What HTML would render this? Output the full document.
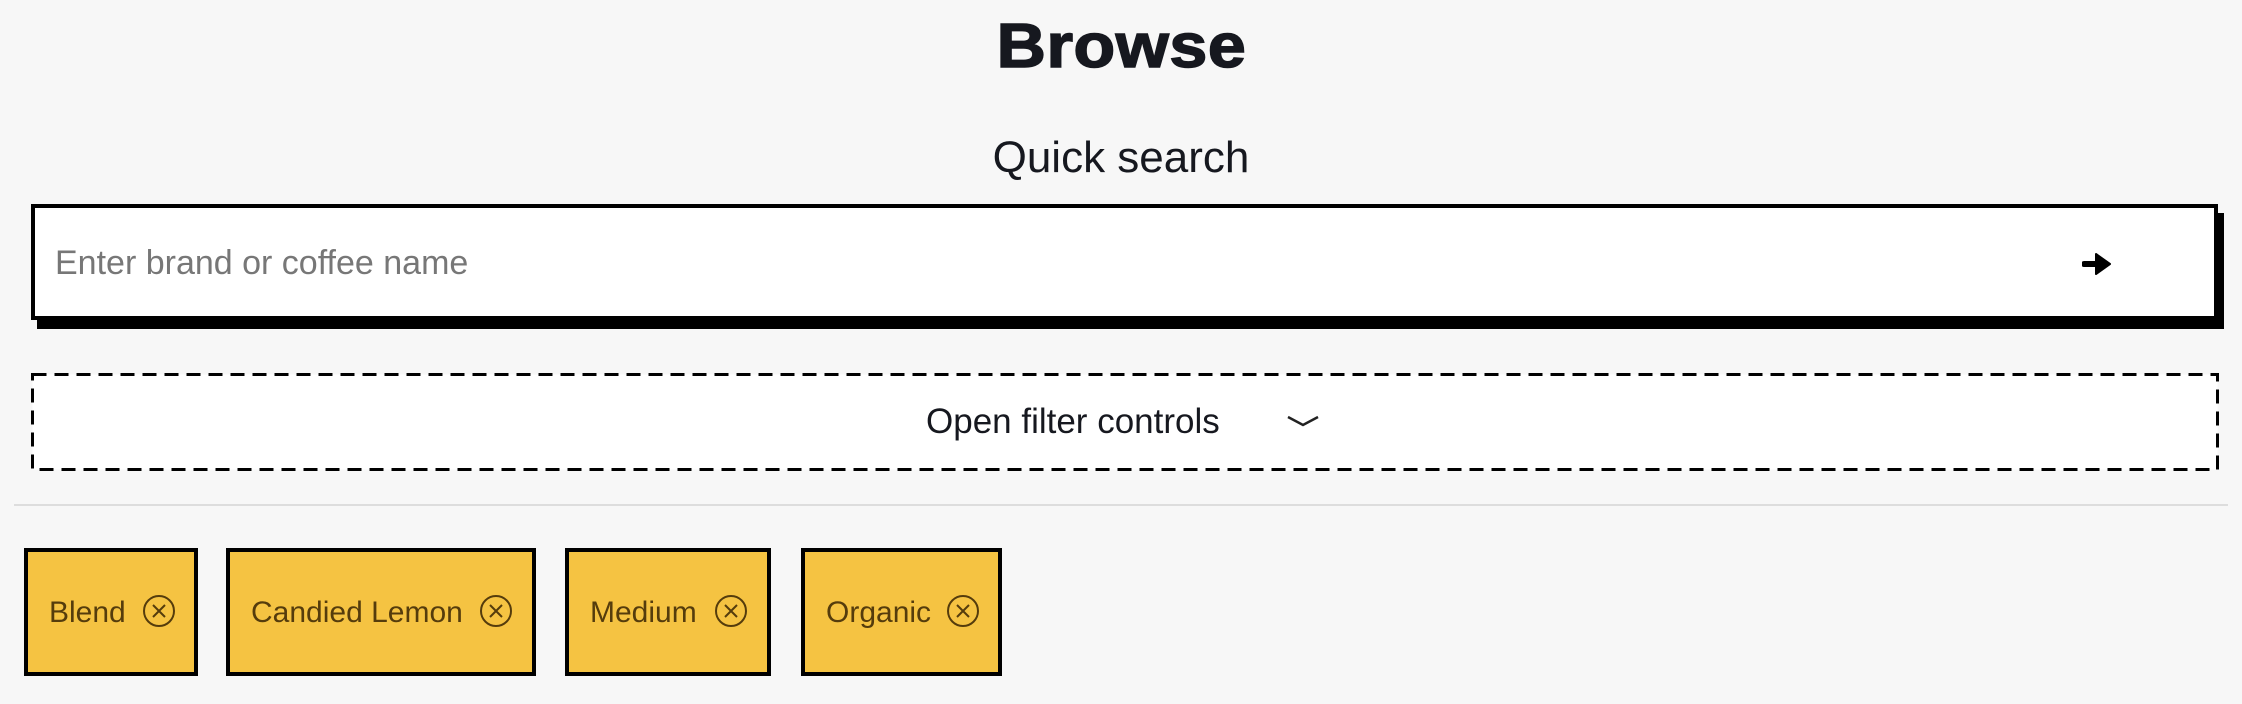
<!DOCTYPE html>
<html><head><meta charset="utf-8"><style>
html,body{margin:0;padding:0;background:#f7f7f7;width:2242px;height:704px;overflow:hidden;position:relative;font-family:"Liberation Sans",sans-serif}
.a{position:absolute;white-space:nowrap}
.chip{position:absolute;top:548px;height:128px;box-sizing:border-box;border:4px solid #000;background:#f5c342;color:#553c0c;font-size:30px;line-height:122px;padding-left:21px}
.chip svg{position:absolute;top:42px}
</style></head><body>
<div class="a" style="left:0;width:2242px;text-align:center;top:12px;line-height:70px"><span style="display:inline-block;font-size:62px;font-weight:900;color:#16181f;transform:scaleX(1.1);-webkit-text-stroke:1.5px #16181f;letter-spacing:0.5px">Browse</span></div>
<div class="a" style="left:0;width:2242px;text-align:center;top:131px;font-size:44px;color:#16181f;line-height:54px">Quick search</div>
<div class="a" style="left:31px;top:204px;width:2187px;height:116px;box-sizing:border-box;border:4px solid #000;background:#fff;box-shadow:6px 9px 0 #000"></div>
<div class="a" style="left:55px;top:243px;font-size:34px;color:#777;line-height:40px">Enter brand or coffee name</div>
<svg class="a" style="left:2082px;top:252px" width="30" height="24" viewBox="0 0 30 24"><path d="M2 12H18" stroke="#000" stroke-width="6" stroke-linecap="round"/><path d="M14 2L28 12L14 22Z" fill="#000" stroke="#000" stroke-width="2" stroke-linejoin="round"/></svg>
<svg class="a" style="left:31px;top:373px" width="2188" height="98"><rect x="1.5" y="1.5" width="2185" height="95" fill="#fff" stroke="#000" stroke-width="3" stroke-dasharray="14 8"/></svg>
<div class="a" style="left:926px;top:401px;font-size:35px;color:#16181f;line-height:42px">Open filter controls</div>
<svg class="a" style="left:1286px;top:414px" width="34" height="14"><path d="M2 3L17 11L32 3" fill="none" stroke="#222" stroke-width="2.5"/></svg>
<div class="a" style="left:14px;top:504px;width:2214px;height:2px;background:#ddd"></div>
<div class="chip" style="left:24px;width:174px">Blend<svg style="left:114px" width="34" height="34"><circle cx="17" cy="17" r="15" fill="none" stroke="#553c0c" stroke-width="2"/><path d="M11 11L23 23M23 11L11 23" stroke="#553c0c" stroke-width="2"/></svg></div>
<div class="chip" style="left:226px;width:310px">Candied Lemon<svg style="left:249px" width="34" height="34"><circle cx="17" cy="17" r="15" fill="none" stroke="#553c0c" stroke-width="2"/><path d="M11 11L23 23M23 11L11 23" stroke="#553c0c" stroke-width="2"/></svg></div>
<div class="chip" style="left:565px;width:206px">Medium<svg style="left:145px" width="34" height="34"><circle cx="17" cy="17" r="15" fill="none" stroke="#553c0c" stroke-width="2"/><path d="M11 11L23 23M23 11L11 23" stroke="#553c0c" stroke-width="2"/></svg></div>
<div class="chip" style="left:801px;width:201px">Organic<svg style="left:141px" width="34" height="34"><circle cx="17" cy="17" r="15" fill="none" stroke="#553c0c" stroke-width="2"/><path d="M11 11L23 23M23 11L11 23" stroke="#553c0c" stroke-width="2"/></svg></div>
</body></html>
